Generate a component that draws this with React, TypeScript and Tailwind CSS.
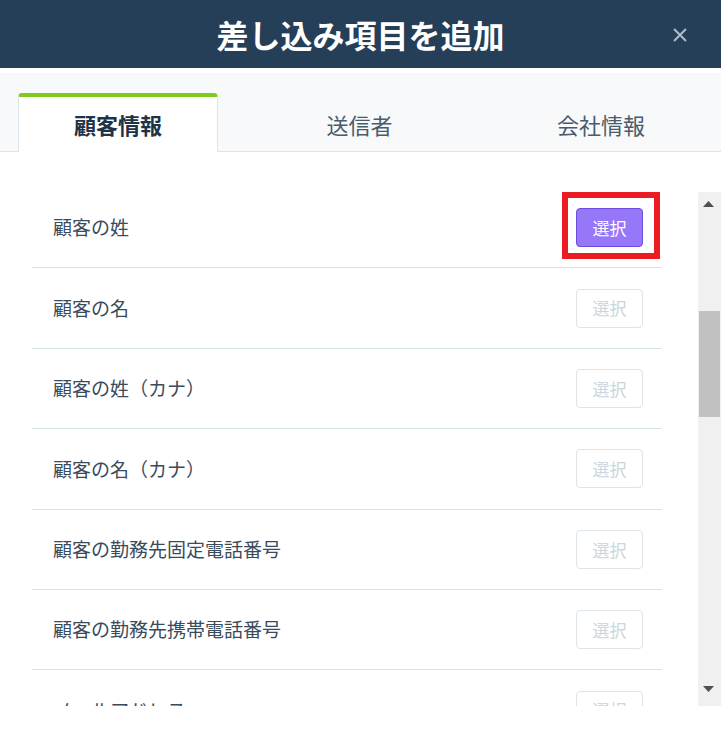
import React from 'react';

const FONT = "font-['Noto_Sans_CJK_JP','Noto_Sans',sans-serif]";

const tabs = ['顧客情報', '送信者', '会社情報'];

const items = [
  '顧客の姓',
  '顧客の名',
  '顧客の姓（カナ）',
  '顧客の名（カナ）',
  '顧客の勤務先固定電話番号',
  '顧客の勤務先携帯電話番号',
  'メールアドレス',
];

function Row({ label, active }: { label: string; active: boolean }) {
  return (
    <div className="relative flex h-[80.4px] shrink-0 items-center justify-between border-b border-[#d8e2e9] pl-[21px] pr-[19px]">
      <span className="text-[19px] text-[#3a4b5b]">{label}</span>
      {active ? (
        <button className="h-[39px] w-[67px] rounded-[4px] border border-[#6b4be0] bg-[#9677f8] text-[17px] text-white">
          選択
        </button>
      ) : (
        <button className="h-[39px] w-[67px] rounded-[4px] border border-[#dce4ea] bg-white text-[17px] text-[#cbd5dd]">
          選択
        </button>
      )}
      {/* 注釈の赤枠 */}
      {active && (
        <div className="pointer-events-none absolute left-[530px] top-[4px] h-[67px] w-[98px] border-[6px] border-[#ec1c24]" />
      )}
    </div>
  );
}

export default function App() {
  return (
    <div className={`h-[737px] w-[721px] overflow-hidden bg-white ${FONT}`}>
      {/* ヘッダー */}
      <div className="relative flex h-[68px] items-center justify-center bg-[#243f57]">
        <h1 className="text-[32px] font-bold leading-none text-white">差し込み項目を追加</h1>
        <svg className="absolute right-[33px] top-[27px]" width="16" height="16" viewBox="0 0 16 16">
          <path d="M2 2 L14 14 M14 2 L2 14" stroke="#aebccb" strokeWidth="2" />
        </svg>
      </div>

      {/* タブ */}
      <div className="mt-[5px] flex h-[79px] items-end justify-between border-b border-[#dbe4ea] bg-[#f7f9fb] pl-[18px] pr-[20px]">
        {tabs.map((tab, i) =>
          i === 0 ? (
            <div
              key={tab}
              className="-mb-px flex h-[59px] w-[200px] items-center justify-center rounded-t-[4px] border-x border-t-[4px] border-x-[#dde5ea] border-t-[#82c91e] bg-white pb-[1px] text-[22px] font-bold text-[#1f3347]"
            >
              {tab}
            </div>
          ) : (
            <div key={tab} className="flex h-[58px] w-[200px] items-center justify-center pt-[4px] text-[22px] text-[#4a5b6b]">
              {tab}
            </div>
          )
        )}
      </div>

      {/* リスト */}
      <div className="mt-[40px] flex h-[514px]">
        <div className="ml-[32px] flex w-[630px] flex-col overflow-hidden">
          <div className="-mt-[4px] flex flex-col">
            {items.map((label, i) => (
              <Row key={label} label={label} active={i === 0} />
            ))}
          </div>
        </div>

        {/* スクロールバー */}
        <div className="relative ml-[36px] h-full w-[23px] bg-[#f0f0f0]">
          <svg className="absolute left-[5px] top-[9px]" width="11" height="6" viewBox="0 0 11 6">
            <path d="M5.5 0 L11 6 L0 6 Z" fill="#505050" />
          </svg>
          <div className="absolute left-[1px] top-[119px] h-[106px] w-[21px] bg-[#c1c1c1]" />
          <svg className="absolute bottom-[14px] left-[5px]" width="11" height="6" viewBox="0 0 11 6">
            <path d="M0 0 L11 0 L5.5 6 Z" fill="#505050" />
          </svg>
        </div>
      </div>
    </div>
  );
}
